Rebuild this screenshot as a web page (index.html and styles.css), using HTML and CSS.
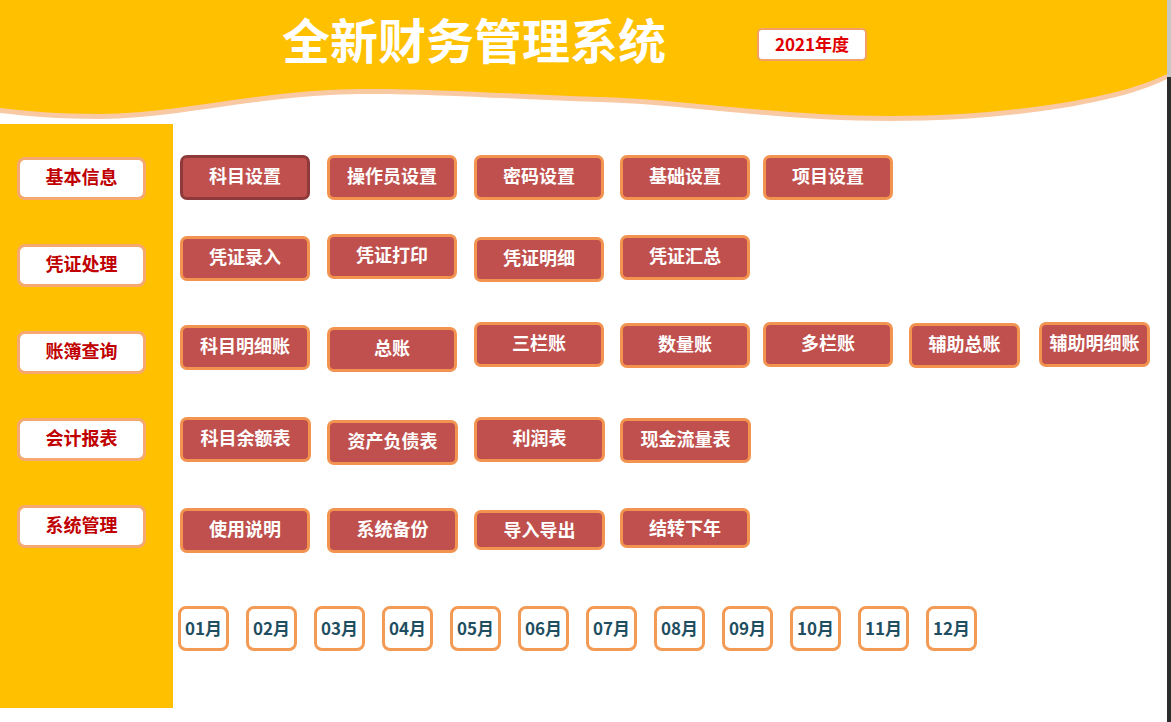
FILE: index.html
```html
<!DOCTYPE html>
<html lang="zh-CN">
<head>
<meta charset="utf-8">
<title>全新财务管理系统</title>
<link rel="stylesheet" href="styles.css">
</head>
<body>
<div class="frame">
  <div class="page">
    <header class="top">
      <svg class="wave" viewBox="0 0 1167 124" preserveAspectRatio="none" aria-hidden="true">
        <path fill="#F9C9A4" d="M0 0 H1167 V79 C1120 103 1010 121 890 121 C780 121 680 104 600 102 C500 99 400 91 330 95 C240 100 170 119 100 119 C60 119 25 116 0 113 Z"/>
        <path fill="#FFC000" d="M0 0 H1167 V74 C1120 98 1010 116 890 116 C780 116 680 99 600 97 C500 94 400 86 330 90 C240 95 170 114 100 114 C60 114 25 111 0 108 Z"/>
      </svg>
      <div class="top-inner">
        <h1 class="title">全新财务管理系统</h1>
        <div class="year">2021年度</div>
      </div>
    </header>
    <div class="content">
      <aside class="side">
        <div class="side-btn">基本信息</div>
        <div class="side-btn">凭证处理</div>
        <div class="side-btn">账簿查询</div>
        <div class="side-btn">会计报表</div>
        <div class="side-btn">系统管理</div>
      </aside>
      <main class="main">
        <div class="row row1">
          <div class="btn active">科目设置</div>
          <div class="btn">操作员设置</div>
          <div class="btn">密码设置</div>
          <div class="btn">基础设置</div>
          <div class="btn">项目设置</div>
        </div>
        <div class="row row2">
          <div class="btn d2">凭证录入</div>
          <div class="btn">凭证打印</div>
          <div class="btn d3">凭证明细</div>
          <div class="btn d1">凭证汇总</div>
        </div>
        <div class="row row3">
          <div class="btn d3">科目明细账</div>
          <div class="btn d5">总账</div>
          <div class="btn">三栏账</div>
          <div class="btn d1">数量账</div>
          <div class="btn">多栏账</div>
          <div class="btn narrow d1">辅助总账</div>
          <div class="btn narrow">辅助明细账</div>
        </div>
        <div class="row row4">
          <div class="btn wide">科目余额表</div>
          <div class="btn wide d3">资产负债表</div>
          <div class="btn wide">利润表</div>
          <div class="btn wide d1">现金流量表</div>
        </div>
        <div class="row row5">
          <div class="btn">使用说明</div>
          <div class="btn wide">系统备份</div>
          <div class="btn wide short d2">导入导出</div>
          <div class="btn short">结转下年</div>
        </div>
        <div class="months">
          <div class="month">01月</div>
          <div class="month">02月</div>
          <div class="month">03月</div>
          <div class="month">04月</div>
          <div class="month">05月</div>
          <div class="month">06月</div>
          <div class="month">07月</div>
          <div class="month">08月</div>
          <div class="month">09月</div>
          <div class="month">10月</div>
          <div class="month">11月</div>
          <div class="month">12月</div>
        </div>
      </main>
    </div>
  </div>
  <div class="edge"><div class="edge-top"></div></div>
</div>
</body>
</html>
```
FILE: styles.css
```css
html, body {
  margin: 0;
  padding: 0;
  background: #ffffff;
}
body {
  font-family: "Noto Sans CJK SC", "Microsoft YaHei", "Noto Sans", sans-serif;
  overflow: hidden;
}
.frame {
  display: flex;
  width: 1171px;
  height: 722px;
}
.page {
  width: 1167px;
  flex: none;
  display: flex;
  flex-direction: column;
}
.edge {
  width: 4px;
  flex: none;
  background: #2b2b2b;
  display: flex;
  flex-direction: column;
}
.edge-top {
  height: 77px;
  background: #c6c6c6;
}

/* header */
.top {
  position: relative;
  height: 124px;
  flex: none;
}
.wave {
  position: absolute;
  left: 0;
  top: 0;
  width: 1167px;
  height: 124px;
  display: block;
}
.top-inner {
  position: relative;
  display: flex;
  align-items: center;
  height: 84px;
  padding-left: 282px;
}
.title {
  margin: 0 0 8px 0;
  font-size: 48px;
  line-height: 1;
  font-weight: 700;
  color: #ffffff;
  letter-spacing: 0;
}
.year {
  margin-left: 91px;
  margin-top: 5px;
  box-sizing: border-box;
  width: 110px;
  height: 33px;
  padding-bottom: 3px;
  background: #ffffff;
  border: 2px solid #F2A066;
  border-radius: 5px;
  color: #E00000;
  font-size: 17px;
  font-weight: 700;
  display: flex;
  align-items: center;
  justify-content: center;
}

/* content */
.content {
  display: flex;
  flex: none;
}
.side {
  width: 173px;
  height: 584px;
  background: #FFC000;
  box-sizing: border-box;
  padding: 33px 0 0 17px;
  display: flex;
  flex-direction: column;
  gap: 44px;
}
.side-btn {
  box-sizing: border-box;
  width: 129px;
  height: 43px;
  padding-bottom: 5px;
  background: #ffffff;
  border: 3px solid #F5A971;
  border-radius: 8px;
  color: #C00000;
  font-size: 18px;
  font-weight: 700;
  display: flex;
  align-items: center;
  justify-content: center;
}

.main {
  flex: 1;
  box-sizing: border-box;
  padding: 31px 0 0 7px;
  display: flex;
  flex-direction: column;
}
.row {
  display: grid;
  grid-template-columns: 147px 147px 146px 143px 146px 130px 111px;
  align-items: start;
  height: 50px;
}
.row2 { margin-top: 29px; }
.row3 { margin-top: 38px; }
.row4 { margin-top: 45px; }
.row5 { margin-top: 41px; }

.btn {
  box-sizing: border-box;
  width: 130px;
  height: 45px;
  padding-bottom: 5px;
  background: #C0504D;
  border: 3px solid #F39350;
  border-radius: 7px;
  color: #ffffff;
  font-size: 18px;
  font-weight: 700;
  display: flex;
  align-items: center;
  justify-content: center;
  white-space: nowrap;
}
.btn.active {
  border-color: #8E3A3A;
}
.btn.narrow { width: 111px; }
.btn.wide { width: 131px; }
.btn.short { height: 40px; padding-bottom: 3px; }
.d1 { margin-top: 1px; }
.d2 { margin-top: 2px; }
.d3 { margin-top: 3px; }
.d5 { margin-top: 5px; }

.months {
  margin-top: 48px;
  margin-left: -2px;
  display: flex;
  gap: 17px;
}
.month {
  box-sizing: border-box;
  width: 51px;
  height: 45px;
  padding-bottom: 3px;
  background: #ffffff;
  border: 3px solid #F39A55;
  border-radius: 8px;
  color: #1F4E60;
  font-size: 17px;
  font-weight: 700;
  display: flex;
  align-items: center;
  justify-content: center;
  white-space: nowrap;
}
```
